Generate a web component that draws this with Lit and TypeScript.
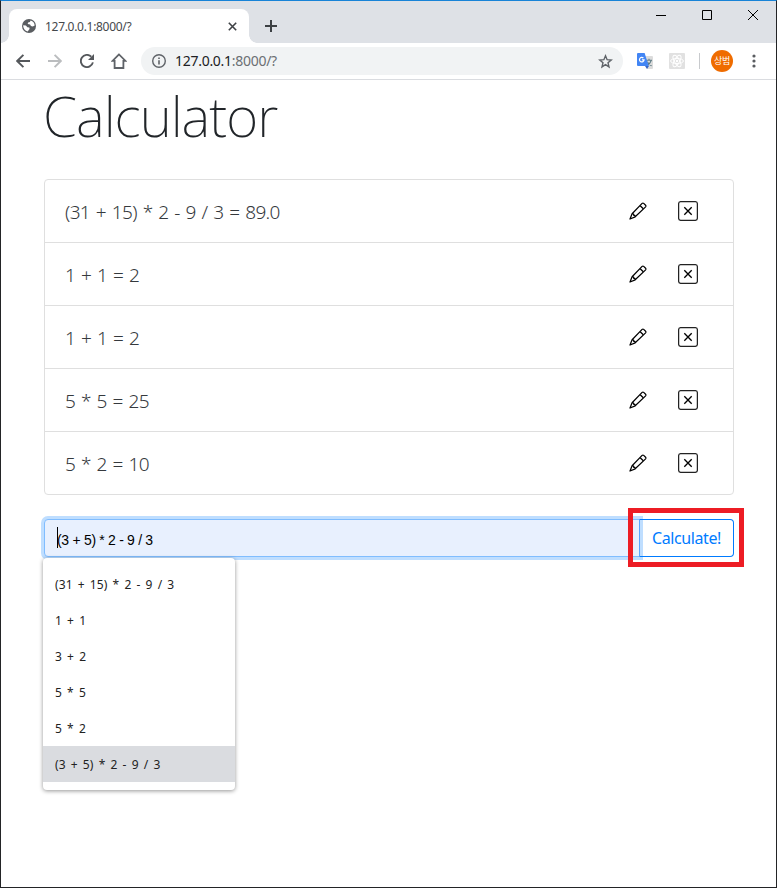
import { LitElement, html, css, svg } from "lit";
import { customElement, property } from "lit/decorators.js";
import { classMap } from "lit/directives/class-map.js";

const globe = svg`<svg width="14" height="14" viewBox="0 0 14 14"><circle cx="7" cy="7" r="7" fill="#5a5d61"/><path d="M1.2 6.3 3.9 6.6 5.4 8.2 7.3 8.4 7.6 10 6.7 11.1 5.8 12.6A5.8 5.8 0 0 1 1.2 6.3ZM8.6 1.5 7.9 3.1 6.1 3.4 5.7 5.1 8.1 5.4 8.9 7.1 10.8 7.5 12.7 6.6A5.8 5.8 0 0 0 8.6 1.5Z" fill="#fff"/></svg>`;
const tabClose = svg`<svg width="9" height="9" viewBox="0 0 9 9"><path d="M.8.8 8.2 8.2M8.2.8.8 8.2" stroke="#3f4246" stroke-width="1.6"/></svg>`;
const plus = svg`<svg width="12" height="12" viewBox="0 0 12 12"><path d="M6 0V12M0 6H12" stroke="#3c4043" stroke-width="2"/></svg>`;
const arrow = svg`<svg width="14" height="14" viewBox="0 0 14 14"><path d="M14 7H1.5M7.4.8 1.2 7 7.4 13.2" fill="none" stroke="currentColor" stroke-width="1.9"/></svg>`;
const reload = svg`<svg width="14" height="14" viewBox="0 0 14 14"><path d="M12.9 8.4A6.1 6.1 0 1 1 11.3 2.7" fill="none" stroke="#55585c" stroke-width="1.9"/><path d="M14 0V6H8Z" fill="#55585c"/></svg>`;
const home = svg`<svg width="16" height="16" viewBox="0 0 16 16"><path d="M8 1.4 1.5 7.9H3.6V15H12.4V7.9H14.5Z" fill="none" stroke="#5f6368" stroke-width="1.8"/></svg>`;
const info = svg`<svg width="14" height="14" viewBox="0 0 14 14"><circle cx="7" cy="7" r="6.3" fill="none" stroke="#5f6368" stroke-width="1.4"/><path d="M7 6.2V10.5M7 3.4V5" stroke="#5f6368" stroke-width="1.6"/></svg>`;
const star = svg`<svg width="15" height="15" viewBox="0 0 15 15"><path d="M7.5 1.8 9.1 5.7 13.2 6 10 8.7 11 12.9 7.5 10.6 4 12.9 5 8.7 1.8 6 5.9 5.7Z" fill="none" stroke="#5f6368" stroke-width="1.4"/></svg>`;
const translate = svg`<svg width="16" height="16" viewBox="0 0 16 16"><path d="M6 3H15Q16 3 16 4V15Q16 16 15 16H10Z" fill="#dcdcdc"/><path d="M9 7.3H15M12 5.8V7.3M14.2 7.5Q13 11 10 12.7M10.3 8.8Q12 11.8 14.6 12.7" stroke="#607d86" stroke-width="1.1" fill="none"/><path d="M1 0H7.6L11.8 13H1Q0 13 0 12V1Q0 0 1 0Z" fill="#4285f4"/><path d="M8 13H12L10 16Z" fill="#3565c5"/><path d="M6.4 5A2.3 2.3 0 1 0 7.1 6.8H4.9" stroke="#fff" stroke-width="1.2" fill="none"/></svg>`;
const atom = svg`<svg width="16" height="16" viewBox="0 0 16 16"><rect width="16" height="16" rx="1" fill="#e1e1e1"/><g fill="none" stroke="#fff" stroke-width="1"><ellipse cx="8" cy="8" rx="6.4" ry="2.6"/><ellipse cx="8" cy="8" rx="6.4" ry="2.6" transform="rotate(60 8 8)"/><ellipse cx="8" cy="8" rx="6.4" ry="2.6" transform="rotate(120 8 8)"/></g><circle cx="8" cy="8" r="1.2" fill="#fff"/></svg>`;
const menu = svg`<svg width="4" height="14" viewBox="0 0 4 14" fill="#5a5d61"><circle cx="2" cy="2" r="1.6"/><circle cx="2" cy="7" r="1.6"/><circle cx="2" cy="12" r="1.6"/></svg>`;
const minimize = svg`<svg width="10" height="10" viewBox="0 0 10 10"><path d="M0 5.5H10" stroke="#000"/></svg>`;
const maximize = svg`<svg width="10" height="10" viewBox="0 0 10 10"><path d="M.5.5H9.5V9.5H.5Z" stroke="#000" fill="none"/></svg>`;
const winClose = svg`<svg width="10" height="10" viewBox="0 0 10 10"><path d="M0 0 10 10M10 0 0 10" stroke="#000"/></svg>`;
const pencil = svg`<svg width="20" height="20" viewBox="0 0 20 20" fill="none" stroke="#000" stroke-width="1.25" stroke-linejoin="round"><path d="M14.1 2.4Q14.9 1.6 15.7 2.4L17.6 4.3Q18.4 5.1 17.6 5.9L7.2 15.8 2 18 4.1 12.8Z"/><path d="M12.2 4.7 15.3 7.8M4.2 12.7 5.6 13.1 5.7 14.3 6.9 14.4 7.3 15.7"/></svg>`;
const xSquare = svg`<svg width="20" height="20" viewBox="0 0 20 20" fill="none" stroke="#000"><rect x=".62" y=".62" width="18.76" height="18.76" rx="2.1" stroke-width="1.25" stroke="#222"/><path d="M6.3 6.3 13.7 13.7M13.7 6.3 6.3 13.7" stroke-width="1.35"/></svg>`;

@customElement("browser-chrome")
class BrowserChrome extends LitElement {
  static styles = css`
    :host { display: block; font-family: "Noto Sans", "Noto Sans CJK KR", sans-serif; }
    svg { display: block; flex: none; }
    .strip { height: 42px; background: #dee1e6; display: flex; padding-left: 8px; }
    .tab { align-self: flex-end; position: relative; width: 240px; height: 34px; box-sizing: border-box; background: #fff; border-radius: 8px 8px 0 0; display: flex; align-items: center; padding: 0 12px 0 13px; }
    .tab::before, .tab::after { content: ""; position: absolute; bottom: 0; width: 8px; height: 8px; }
    .tab::before { left: -8px; background: radial-gradient(circle at 0 0, #dee1e6 7.5px, #fff 8px); }
    .tab::after { right: -8px; background: radial-gradient(circle at 100% 0, #dee1e6 7.5px, #fff 8px); }
    .title { margin-left: 9px; flex: 1; font-size: 12px; letter-spacing: -.3px; color: #45484c; }
    .new { margin: 19px 0 0 16px; }
    .controls { margin-left: auto; display: flex; gap: 36px; padding: 9px 18px 0 0; }
    .toolbar { height: 36px; background: #fff; border-bottom: 1px solid #dadce0; display: flex; align-items: center; padding: 0 20px 0 15px; }
    .nav { display: flex; align-items: center; gap: 18px; color: #55585c; }
    .home { margin-left: -1px; }
    .forward { color: #bbbdbf; transform: scaleX(-1); }
    .omnibox { flex: 1; height: 28px; border-radius: 14px; background: #f1f3f4; margin-left: 14px; display: flex; align-items: center; padding: 0 10px 0 11px; }
    .url { flex: 1; margin-left: 9px; font-size: 14px; letter-spacing: -.28px; line-height: 20px; margin-top: -1px; color: #202124; }
    .rest { color: #6b6f73; }
    .ext { display: flex; align-items: center; margin-left: 14px; }
    .atom { margin-left: 16px; }
    .sep { width: 1px; height: 16px; background: #c8cacd; margin-left: 14px; }
    .avatar { width: 22px; height: 22px; border-radius: 50%; background: #ef6c00; color: #fff; font: 9px/22px "Noto Sans CJK KR", sans-serif; letter-spacing: -.3px; text-align: center; margin: 0 19px 0 11px; white-space: nowrap; }
  `;
  render() {
    return html`
      <div class="strip">
        <div class="tab">${globe}<span class="title">127.0.0.1:8000/?</span>${tabClose}</div>
        <div class="new">${plus}</div>
        <div class="controls">${minimize}${maximize}${winClose}</div>
      </div>
      <div class="toolbar">
        <div class="nav">${arrow}<div class="forward">${arrow}</div>${reload}<div class="home">${home}</div></div>
        <div class="omnibox">${info}<span class="url">127.0.0.1<span class="rest">:8000/?</span></span>${star}</div>
        <div class="ext">${translate}<div class="atom">${atom}</div><div class="sep"></div><div class="avatar">상범</div>${menu}</div>
      </div>`;
  }
}

@customElement("history-row")
class HistoryRow extends LitElement {
  @property() text = "";
  static styles = css`
    :host { display: flex; align-items: center; height: 62px; padding: 0 35px 0 20px; font: 300 19px "Noto Sans", sans-serif; color: #35393d; }
    .text { flex: 1; letter-spacing: -.65px; word-spacing: 1.5px; padding-top: 2px; }
    .actions { display: flex; gap: 30px; }
    svg { display: block; }
  `;
  render() {
    return html`<span class="text">${this.text}</span><div class="actions">${pencil}${xSquare}</div>`;
  }
}

@customElement("app-root")
class AppRoot extends LitElement {
  history = ["(31 + 15) * 2 - 9 / 3 = 89.0", "1 + 1 = 2", "1 + 1 = 2", "5 * 5 = 25", "5 * 2 = 10"];
  suggestions = ["(31 + 15) * 2 - 9 / 3", "1 + 1", "3 + 2", "5 * 5", "5 * 2", "(3 + 5) * 2 - 9 / 3"];
  static styles = css`
    :host { display: block; box-sizing: border-box; height: 888px; border: 1px solid #232426; border-top-color: #1883d7; background: #fff; overflow: hidden; }
    main { padding: 0 42px 0 43px; }
    h1 { margin: 0 0 0 -1px; height: 99px; font: 200 55px/71px "Noto Sans", sans-serif; letter-spacing: -1px; color: #212529; }
    .list { border: 1px solid #dfdfdf; border-radius: 4px; }
    .row + .row { border-top: 1px solid #dfdfdf; }
    .form { position: relative; display: flex; margin-top: 24px; height: 38px; }
    .field { width: 596px; box-sizing: border-box; border: 1px solid #80bdff; border-radius: 4px 0 0 4px; background: #e8f0fe; box-shadow: 0 0 0 3px #bfdeff; display: flex; align-items: center; padding-left: 12px; font: 14px "Liberation Sans", sans-serif; color: #000; z-index: 1; }
    .caret { width: 1px; height: 21px; background: #000; margin: -1px -1px 0 0; }
    .value { padding-top: 4px; letter-spacing: -.3px; }
    .go { flex: 1; box-sizing: border-box; border: 1px solid #007bff; border-radius: 0 4px 4px 0; margin-left: -1px; color: #007bff; font: 16px/37px "Noto Sans", sans-serif; letter-spacing: -.4px; text-align: center; z-index: 2; border-left-color: #56a8ff; }
    .highlight { position: absolute; left: 584px; top: -11px; width: 116px; height: 59px; box-sizing: border-box; border: 5px solid #ed1c24; z-index: 4; }
    .menu { position: absolute; left: -1px; top: 39px; width: 192px; height: 232px; box-sizing: border-box; padding-top: 8px; background: #fff; border-radius: 4px; box-shadow: 0 1px 4px rgba(0,0,0,.42); z-index: 3; font: 12px/38px "Noto Sans", sans-serif; color: #222; }
    .option { height: 36px; padding-left: 12px; letter-spacing: .1px; word-spacing: 1.9px; }
    .active { background: #dadce0; }
  `;
  render() {
    return html`
      <browser-chrome></browser-chrome>
      <main>
        <h1>Calculator</h1>
        <div class="list">${this.history.map(t => html`<history-row class="row" .text=${t}></history-row>`)}</div>
        <div class="form">
          <div class="field"><span class="caret"></span><span class="value">(3 + 5) * 2 - 9 / 3</span></div>
          <div class="go">Calculate!</div>
          <div class="menu">${this.suggestions.map((t, i) => html`<div class=${classMap({ option: true, active: i === 5 })}>${t}</div>`)}</div>
          <div class="highlight"></div>
        </div>
      </main>`;
  }
}
